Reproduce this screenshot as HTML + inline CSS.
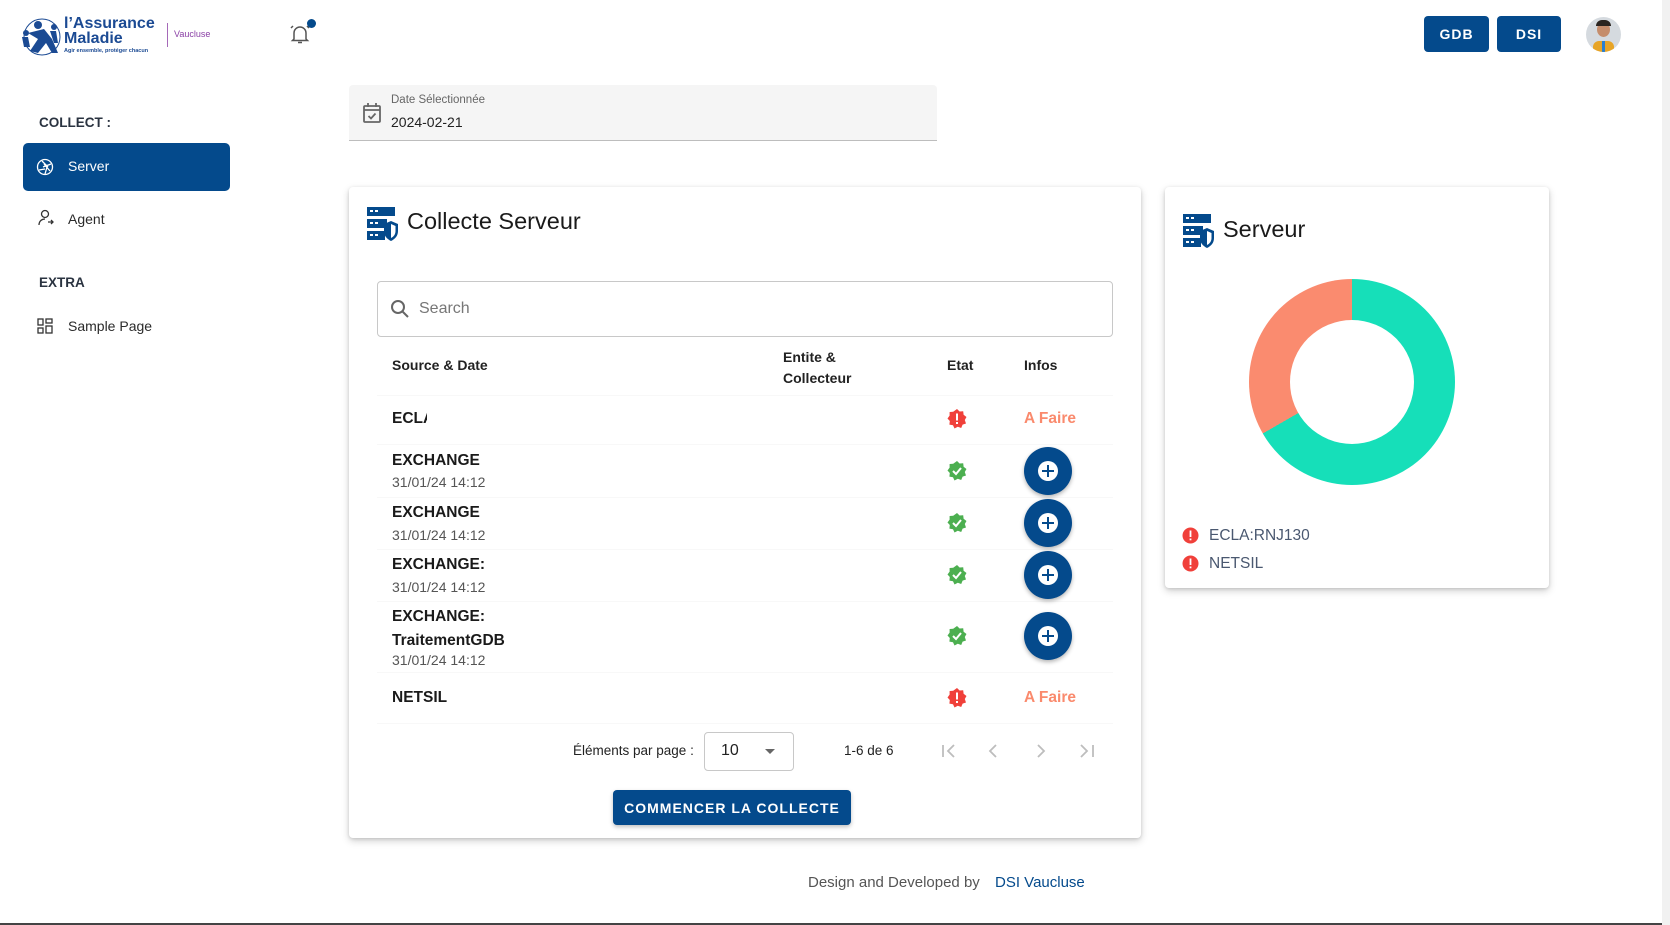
<!DOCTYPE html>
<html><head><meta charset="utf-8"><style>
*{box-sizing:border-box;margin:0;padding:0}
body{width:1670px;height:925px;background:#fff;font-family:"Liberation Sans",Arial,sans-serif;color:#212121;position:relative;overflow:hidden}
.a{position:absolute}
.btn{background:#044a8c;color:#fff;font-weight:bold;border-radius:4px;display:flex;align-items:center;justify-content:center;letter-spacing:1px}
.card{background:#fff;border-radius:4px;box-shadow:0 3px 8px rgba(0,0,0,.18),0 1px 3px rgba(0,0,0,.12)}
.hd{font-size:14px;font-weight:bold;color:#222}
.src{font-size:15.5px;font-weight:bold;color:#1a1a1a}
.dt{font-size:14px;color:#555}
.plus{width:48px;height:48px;border-radius:50%;background:#044a8c;box-shadow:0 2px 4px rgba(0,0,0,.3);display:flex;align-items:center;justify-content:center}
.plus i{width:20px;height:20px;border-radius:50%;background:#fff;position:relative}
.plus i:before{content:"";position:absolute;left:4px;top:9px;width:12px;height:2px;background:#044a8c}
.plus i:after{content:"";position:absolute;left:9px;top:4px;width:2px;height:12px;background:#044a8c}
.af{font-size:15.5px;font-weight:bold;color:#fa8a6d}
.line{position:absolute;left:377px;width:736px;height:1px;background:#f8f8f8}
</style></head><body>
<!-- logo -->
<svg class="a" style="left:18px;top:13px" width="48" height="44" viewBox="0 0 48 44"><circle cx="24" cy="24" r="18" fill="none" stroke="#1b4a93" stroke-width="1"/><g fill="#1b4a93"><circle cx="20" cy="12" r="4"/><path d="M10 20 L26 16 L34 26 L40 40 L34 40 L28 30 L20 40 L12 38 L20 26 Z"/><circle cx="36" cy="14" r="3"/><path d="M32 18 L38 18 L40 30 L36 30Z"/><circle cx="8" cy="20" r="3"/><path d="M4 24 L10 24 L12 34 L6 34Z"/></g></svg>
<div class="a" style="left:64px;top:16px;color:#1b4a93;font-weight:bold;font-size:16px;line-height:15px">l’Assurance<br>Maladie</div>
<div class="a" style="left:64px;top:48px;color:#1b4a93;font-weight:bold;font-size:5.5px">Agir ensemble, protéger chacun</div>
<div class="a" style="left:167px;top:23px;width:1px;height:24px;background:#a569b8"></div>
<div class="a" style="left:174px;top:29px;color:#8a3fa5;font-size:9px">Vaucluse</div>
<!-- bell -->
<svg class="a" style="left:288px;top:22px" width="24" height="24" viewBox="0 0 24 24" fill="none" stroke="#555" stroke-width="1.5"><path d="M6 17 V11 a6 6 0 0 1 12 0 V17 L19.5 18.5 H4.5Z"/><path d="M10 20.5 h4"/><path d="M3 6 L5 4 M21 6 L19 4"/></svg>
<div class="a" style="left:307px;top:19px;width:9px;height:9px;border-radius:50%;background:#044a8c"></div>
<div class="a btn" style="left:1424px;top:16px;width:65px;height:36px;font-size:14px">GDB</div>
<div class="a btn" style="left:1497px;top:16px;width:64px;height:36px;font-size:14px">DSI</div>
<div class="a" style="left:1586px;top:17px;width:35px;height:35px;border-radius:50%;background:#d5dadf;overflow:hidden"><div class="a" style="left:11px;top:5px;width:13px;height:15px;border-radius:50%;background:#c58d6c"></div><div class="a" style="left:10px;top:3px;width:15px;height:6px;border-radius:6px 6px 0 0;background:#2b2520"></div><div class="a" style="left:7px;top:24px;width:21px;height:12px;border-radius:6px 6px 0 0;background:#e7a426"></div><div class="a" style="left:16px;top:24px;width:3px;height:12px;background:#2a7fd1"></div></div>
<div class="a" style="left:1662px;top:0;width:8px;height:925px;background:#f1f1f1"></div>
<div class="a" style="left:0;top:923px;width:1662px;height:2px;background:#444"></div>
<!-- sidebar -->
<div class="a" style="left:39px;top:115px;font-size:13.5px;font-weight:bold;color:#2a3340">COLLECT :</div>
<div class="a" style="left:23px;top:143px;width:207px;height:48px;background:#044a8c;border-radius:5px"></div>
<svg class="a" style="left:36px;top:158px" width="18" height="18" viewBox="0 0 18 18" fill="none" stroke="#fff" stroke-width="1.3"><circle cx="9" cy="9" r="7.5"/><path d="M6 3 L12 9 M15 6 L7 9 M14 13 L8 6 M9 16 L11 9 M3 12 L9 11"/></svg>
<div class="a" style="left:68px;top:158px;font-size:14px;color:#fff">Server</div>
<svg class="a" style="left:37px;top:209px" width="18" height="18" viewBox="0 0 18 18" fill="none" stroke="#333" stroke-width="1.3"><circle cx="8" cy="5" r="3.5"/><path d="M2 16 c0-4 3-6 6-6 M11 13 h5 M14 11 l2 2 l-2 2"/></svg>
<div class="a" style="left:68px;top:211px;font-size:14px;color:#2a2a2a">Agent</div>
<div class="a" style="left:39px;top:275px;font-size:13.5px;font-weight:bold;color:#2a3340">EXTRA</div>
<svg class="a" style="left:37px;top:318px" width="16" height="16" viewBox="0 0 16 16" fill="none" stroke="#333" stroke-width="1.3"><rect x="1" y="1" width="5" height="6"/><rect x="9" y="1" width="6" height="4"/><rect x="1" y="10" width="5" height="5"/><rect x="9" y="8" width="6" height="7"/></svg>
<div class="a" style="left:68px;top:318px;font-size:14px;color:#2a2a2a">Sample Page</div>
<!-- date -->
<div class="a" style="left:349px;top:85px;width:588px;height:56px;background:#f5f5f5;border-bottom:1px solid #bdbdbd;border-radius:4px 4px 0 0"></div>
<svg class="a" style="left:362px;top:102px" width="20" height="22" viewBox="0 0 20 22" fill="none" stroke="#666" stroke-width="1.8"><rect x="2" y="4" width="16" height="16" rx="1"/><path d="M2 8h16 M6 1v4 M14 1v4 M6.5 14 l2.5 2.5 l4.5 -5"/></svg>
<div class="a" style="left:391px;top:94px;font-size:11.5px;color:#666">Date Sélectionnée</div>
<div class="a" style="left:391px;top:114px;font-size:14px;color:#222">2024-02-21</div>
<!-- main card -->
<div class="a card" style="left:349px;top:187px;width:792px;height:651px"></div>
<svg class="a" style="left:367px;top:207px" width="31" height="35" viewBox="0 0 31 35"><g fill="#044a8c"><rect x="0" y="0" width="28" height="9"/><rect x="0" y="12" width="20" height="9"/><rect x="0" y="24" width="18" height="9"/><path d="M24 14 L31 17 V24 C31 29 28 32 24 34 C20 32 17 29 17 24 V17Z"/></g><g fill="#fff"><rect x="3" y="3" width="3" height="2"/><rect x="8" y="3" width="3" height="2"/><rect x="3" y="15" width="3" height="2"/><rect x="8" y="15" width="3" height="2"/><rect x="3" y="27" width="3" height="2"/><rect x="8" y="27" width="3" height="2"/><path d="M24 17 L28.5 19 V24 C28.5 27 27 29.5 24 31Z"/></g></svg>
<div class="a" style="left:407px;top:208px;font-size:23.5px;color:#1a1a1a">Collecte Serveur</div>
<div class="a" style="left:377px;top:281px;width:736px;height:56px;border:1px solid #c8c8c8;border-radius:4px"></div>
<svg class="a" style="left:390px;top:299px" width="20" height="20" viewBox="0 0 20 20" fill="none" stroke="#666" stroke-width="2"><circle cx="8" cy="8" r="6"/><path d="M12.5 12.5 L18 18"/></svg>
<div class="a" style="left:419px;top:300px;font-size:16px;color:#777">Search</div>
<div class="a hd" style="left:392px;top:357px">Source &amp; Date</div>
<div class="a hd" style="left:783px;top:347px;line-height:21px">Entite &amp;<br>Collecteur</div>
<div class="a hd" style="left:947px;top:357px">Etat</div>
<div class="a hd" style="left:1024px;top:357px">Infos</div>
<div class="line" style="top:395px"></div>
<div class="line" style="top:444px"></div>
<div class="line" style="top:497px"></div>
<div class="line" style="top:549px"></div>
<div class="line" style="top:601px"></div>
<div class="line" style="top:672px"></div>
<div class="line" style="top:723px"></div>
<!-- rows -->
<div class="a src" style="left:392px;top:410px">ECLA</div>
<div class="a" style="left:427px;top:405px;width:30px;height:25px;background:#fff"></div>
<svg class="a" style="left:947px;top:409px" width="20" height="20" viewBox="0 0 20 20"><path d="M10 0 L12.6 2.5 L16.2 2.2 L16.6 5.8 L19.5 8 L17.8 11 L19 14.5 L15.6 15.6 L14.2 19 L10.8 17.8 L7.5 19.5 L6 16.2 L2.4 15.6 L2.8 12 L0.5 9.5 L2.6 6.6 L2.6 3 L6.2 2.8Z" fill="#f0403a"/><rect x="9" y="4.5" width="2" height="7" fill="#fff"/><rect x="9" y="13" width="2" height="2" fill="#fff"/></svg>
<div class="a af" style="left:1024px;top:410px">A Faire</div>

<div class="a src" style="left:392px;top:452px">EXCHANGE</div>
<div class="a dt" style="left:392px;top:474px">31/01/24 14:12</div>
<div class="a src" style="left:392px;top:504px">EXCHANGE</div>
<div class="a dt" style="left:392px;top:527px">31/01/24 14:12</div>
<div class="a src" style="left:392px;top:556px">EXCHANGE:</div>
<div class="a dt" style="left:392px;top:579px">31/01/24 14:12</div>
<div class="a src" style="left:392px;top:605px;line-height:24px">EXCHANGE:<br>TraitementGDB</div>
<div class="a dt" style="left:392px;top:652px">31/01/24 14:12</div>

<svg class="a" style="left:947px;top:461px" width="20" height="20" viewBox="0 0 20 20"><path id="bd" d="M10 0 L12.6 2.5 L16.2 2.2 L16.6 5.8 L19.5 8 L17.8 11 L19 14.5 L15.6 15.6 L14.2 19 L10.8 17.8 L7.5 19.5 L6 16.2 L2.4 15.6 L2.8 12 L0.5 9.5 L2.6 6.6 L2.6 3 L6.2 2.8Z" fill="#4caf50"/><path d="M6 10 L9 13 L14 7" stroke="#fff" stroke-width="2" fill="none"/></svg>
<svg class="a" style="left:947px;top:513px" width="20" height="20" viewBox="0 0 20 20"><use href="#bd"/><path d="M6 10 L9 13 L14 7" stroke="#fff" stroke-width="2" fill="none"/></svg>
<svg class="a" style="left:947px;top:565px" width="20" height="20" viewBox="0 0 20 20"><use href="#bd"/><path d="M6 10 L9 13 L14 7" stroke="#fff" stroke-width="2" fill="none"/></svg>
<svg class="a" style="left:947px;top:626px" width="20" height="20" viewBox="0 0 20 20"><use href="#bd"/><path d="M6 10 L9 13 L14 7" stroke="#fff" stroke-width="2" fill="none"/></svg>

<div class="a plus" style="left:1024px;top:447px"><i></i></div>
<div class="a plus" style="left:1024px;top:499px"><i></i></div>
<div class="a plus" style="left:1024px;top:551px"><i></i></div>
<div class="a plus" style="left:1024px;top:612px"><i></i></div>

<div class="a src" style="left:392px;top:689px">NETSIL</div>
<svg class="a" style="left:947px;top:688px" width="20" height="20" viewBox="0 0 20 20"><path d="M10 0 L12.6 2.5 L16.2 2.2 L16.6 5.8 L19.5 8 L17.8 11 L19 14.5 L15.6 15.6 L14.2 19 L10.8 17.8 L7.5 19.5 L6 16.2 L2.4 15.6 L2.8 12 L0.5 9.5 L2.6 6.6 L2.6 3 L6.2 2.8Z" fill="#f0403a"/><rect x="9" y="4.5" width="2" height="7" fill="#fff"/><rect x="9" y="13" width="2" height="2" fill="#fff"/></svg>
<div class="a af" style="left:1024px;top:689px">A Faire</div>
<!-- pagination -->
<div class="a" style="left:573px;top:743px;font-size:13.5px;color:#222">Éléments par page :</div>
<div class="a" style="left:704px;top:732px;width:90px;height:39px;border:1px solid #c8c8c8;border-radius:4px"></div>
<div class="a" style="left:721px;top:742px;font-size:16px;color:#222">10</div>
<div class="a" style="left:765px;top:749px;width:0;height:0;border-left:5px solid transparent;border-right:5px solid transparent;border-top:5px solid #666"></div>
<div class="a" style="left:844px;top:743px;font-size:13.5px;color:#222">1-6 de 6</div>
<svg class="a" style="left:940px;top:741px" width="160" height="20" viewBox="0 0 160 20" fill="none" stroke="#bdbdbd" stroke-width="1.8"><path d="M3 4v12 M14 4 L8 10 L14 16"/><path d="M56 4 L50 10 L56 16"/><path d="M98 4 L104 10 L98 16"/><path d="M141 4 L147 10 L141 16 M153 4v12"/></svg>
<div class="a btn" style="left:613px;top:790px;width:238px;height:35px;font-size:14px;box-shadow:0 2px 4px rgba(0,0,0,.25)">COMMENCER LA COLLECTE</div>
<!-- serveur card -->
<div class="a card" style="left:1165px;top:187px;width:384px;height:401px"></div>
<svg class="a" style="left:1183px;top:214px" width="31" height="35" viewBox="0 0 31 35"><g fill="#044a8c"><rect x="0" y="0" width="28" height="9"/><rect x="0" y="12" width="20" height="9"/><rect x="0" y="24" width="18" height="9"/><path d="M24 14 L31 17 V24 C31 29 28 32 24 34 C20 32 17 29 17 24 V17Z"/></g><g fill="#fff"><rect x="3" y="3" width="3" height="2"/><rect x="8" y="3" width="3" height="2"/><rect x="3" y="15" width="3" height="2"/><rect x="8" y="15" width="3" height="2"/><rect x="3" y="27" width="3" height="2"/><rect x="8" y="27" width="3" height="2"/><path d="M24 17 L28.5 19 V24 C28.5 27 27 29.5 24 31Z"/></g></svg>
<div class="a" style="left:1223px;top:216px;font-size:23.5px;color:#1a1a1a">Serveur</div>
<div class="a" style="left:1249px;top:279px;width:206px;height:206px;border-radius:50%;background:conic-gradient(#16dfb9 0 240deg,#fa8b6f 240deg 360deg)"></div>
<div class="a" style="left:1290px;top:320px;width:124px;height:124px;border-radius:50%;background:#fff"></div>
<svg class="a" style="left:1182px;top:527px" width="17" height="17" viewBox="0 0 17 17"><circle cx="8.5" cy="8.5" r="8" fill="#f0403a"/><rect x="7.6" y="3.5" width="1.8" height="6.5" fill="#fff"/><rect x="7.6" y="11.5" width="1.8" height="1.8" fill="#fff"/></svg>
<div class="a" style="left:1209px;top:527px;font-size:15.5px;color:#4a5870">ECLA:RNJ130</div>
<svg class="a" style="left:1182px;top:555px" width="17" height="17" viewBox="0 0 17 17"><circle cx="8.5" cy="8.5" r="8" fill="#f0403a"/><rect x="7.6" y="3.5" width="1.8" height="6.5" fill="#fff"/><rect x="7.6" y="11.5" width="1.8" height="1.8" fill="#fff"/></svg>
<div class="a" style="left:1209px;top:555px;font-size:15.5px;color:#4a5870">NETSIL</div>
<!-- footer -->
<div class="a" style="left:808px;top:874px;font-size:15px;color:#555">Design and Developed by</div>
<div class="a" style="left:995px;top:874px;font-size:15px;color:#044a8c">DSI Vaucluse</div>
</body></html>
